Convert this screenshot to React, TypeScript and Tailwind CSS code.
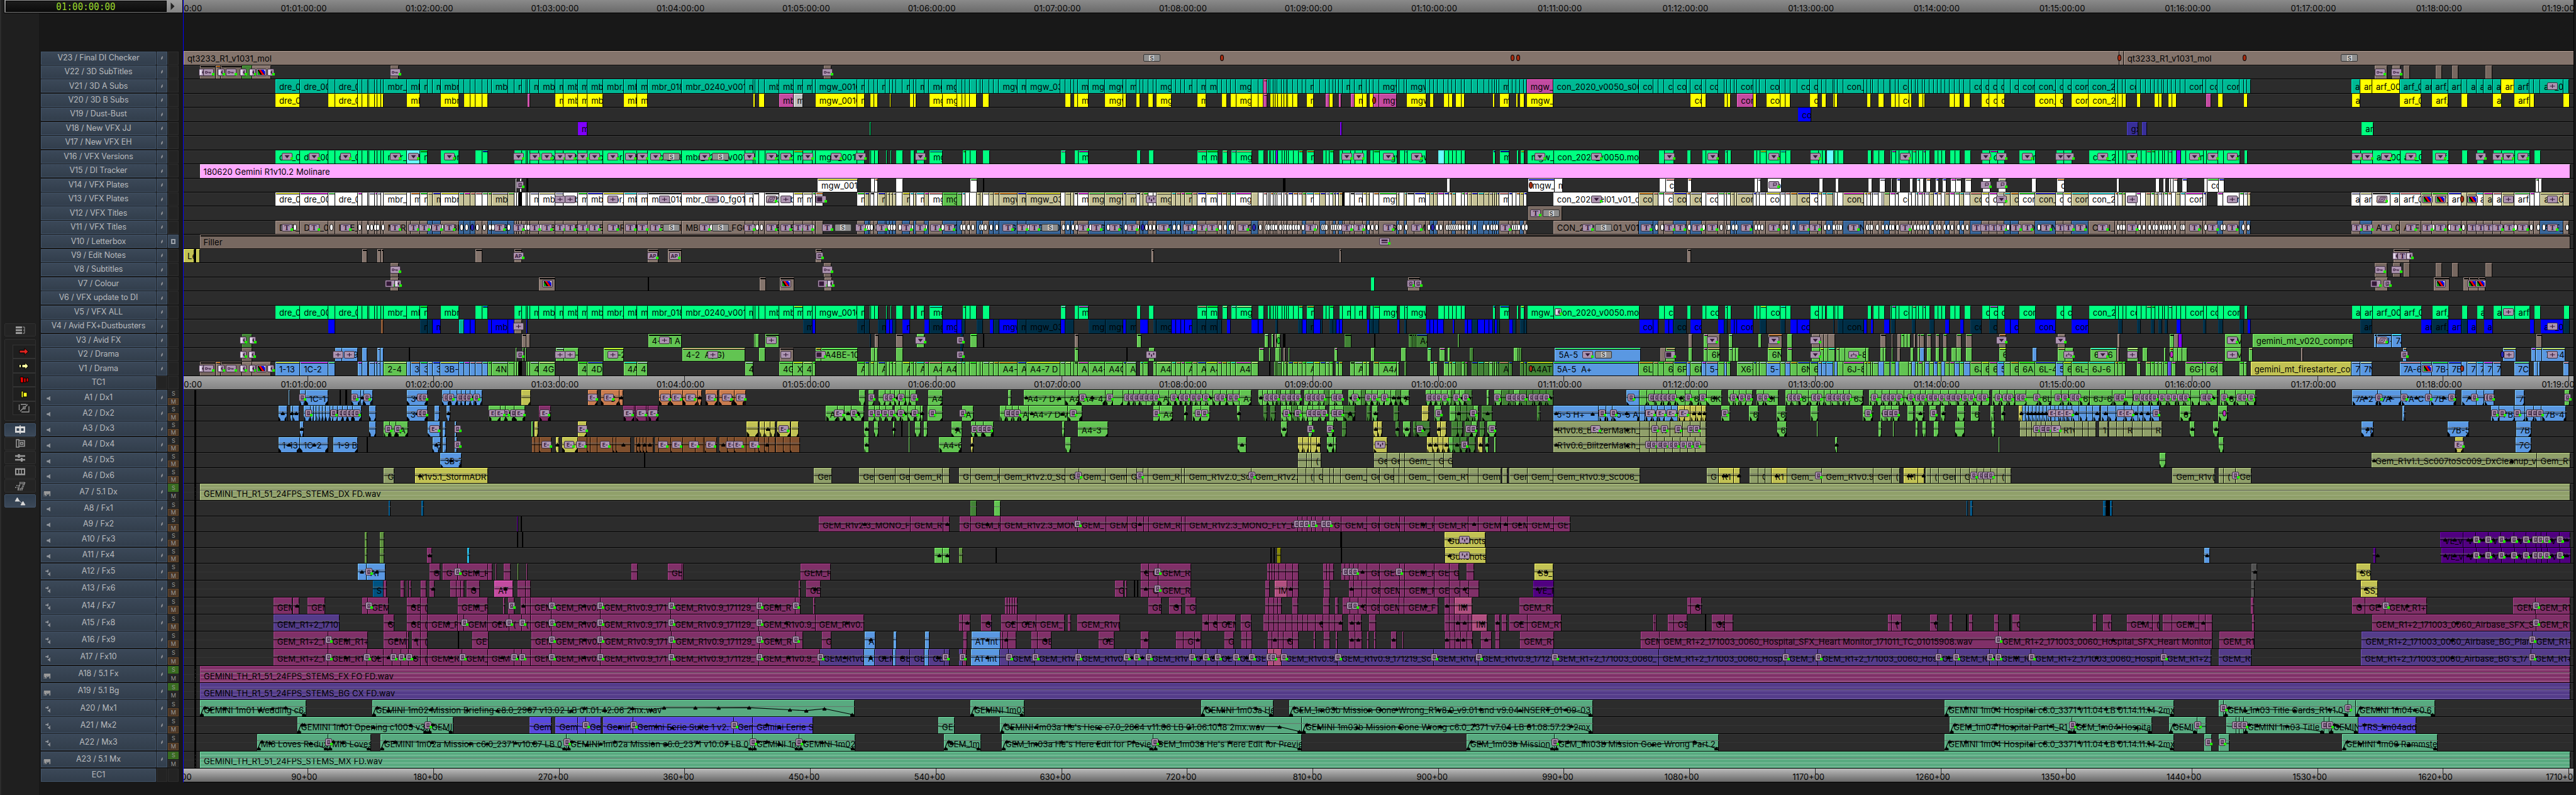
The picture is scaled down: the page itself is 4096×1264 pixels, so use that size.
import React from 'react';

const S = 4096 / 6932;
const ORIGIN = 494;

type Base = [number, number];
const VB: Base[] = [[480, 0.82908], [1700, 0.82908], [2950, 0.82908], [4150, 0.82908], [5400, 0.97704]];
const AB: Base[] = [[490, 1.37117], [2630, 1.37117], [4770, 1.37883]];

const FILL: Record<string, string> = {
  t: 'bg-[#00b894] border-[#00f4cc]',
  y: 'bg-[#ffff00] border-[#ffff00]',
  g: 'bg-[#00ff80] border-[#00ff80]',
  w: 'bg-white border-white',
  k: 'bg-[#c6c298] border-[#fffbc8]',
  b: 'bg-[#84746c] border-[#b09c93]',
  B: 'bg-[#776860] border-[#9d8a82]',
  u: 'bg-[#0000ff] border-[#0000ff]',
  n: 'bg-[#002e46] border-[#003c5c]',
  s: 'bg-[#3a6698] border-[#4c88cc]',
  G: 'bg-[#62c452] border-[#86fa70]',
  D: 'bg-[#428236] border-[#58ae48]',
  c: 'bg-[#5a98e2] border-[#80ccff]',
  m: 'bg-[#c24ba0] border-[#ff64d2]',
  p: 'bg-[#ffa8ff] border-[#ffd0ff]',
  a: 'bg-[#68ffff] border-[#68ffff]',
  x: 'bg-[#c0c0c0] border-white',
  v: 'bg-[#8000ff] border-[#8000ff]',
  i: 'bg-[#382f98] border-[#4c40cc]',
  Y: 'bg-[#c2c254] border-[#ffff70]',
  o: 'bg-[#90a06a] border-[#c0d68c]',
  P: 'bg-[#803068] border-[#ac408c]',
  V: 'bg-[#543c8a] border-[#7050b8]',
  M: 'bg-[#58aa80] border-[#76e6ac]',
  I: 'bg-[#5848de] border-[#7464ff]',
  O: 'bg-[#c87c50] border-[#ffa46a]',
  R: 'bg-[#80502e] border-[#a86a3e]',
  L: 'bg-[#500080] border-[#6c00ac]',
  K: 'bg-[#b05080] border-[#e86aa8]',
  d: 'bg-[#005280] border-[#006cac]',
  F: 'bg-[#5e9040] border-[#7cc054]',
  C: 'bg-[#20a8d8] border-[#30d8ff]',
  Q: 'bg-[#868600] border-[#b0b000]',
  H: 'bg-[#505050] border-[#707070]',
  z: 'bg-black border-black',
};

const CAP: Record<string, string> = {
  y: 'bg-[#ffff00]', c: 'bg-[#00ffff]', m: 'bg-[#ff00ff]', l: 'bg-[#00ff00]', L: 'bg-[#54ff54]',
  o: 'bg-[#ff8000]', b: 'bg-[#0000ff]', s: 'bg-[#ff8080]', v: 'bg-[#c8c8ff]', e: 'bg-[#ffffa0]', k: 'bg-black',
};

interface Clip { x: number; w: number; gap: number; color: string; cap?: string; label?: string }
interface Mark { x: number; kind: string }

function parseClips(sections: string[], bases: Base[], lead = ''): Clip[] {
  const points: { x: number; color: string; cap?: string; label?: string }[] = [];
  sections.forEach((text, i) => {
    const full = i === 0 ? lead + text : text;
    full.split(' ').forEach((token) => {
      const m = /^(\d+)([^\d:])([a-zA-Z])?(?::(.*))?$/.exec(token);
      if (!m) return;
      points.push({ x: (bases[i][0] + +m[1] * bases[i][1] - ORIGIN) * S, color: m[2], cap: m[3], label: m[4]?.replace(/~/g, ' ') });
    });
  });
  const clips: Clip[] = [];
  let cursor = 0;
  points.forEach((p, i) => {
    if (p.color === '.') return;
    const end = i + 1 < points.length ? points[i + 1].x : (6926 - ORIGIN) * S;
    clips.push({ ...p, w: Math.max(1, end - p.x), gap: p.x - cursor });
    cursor = p.x + Math.max(1, end - p.x);
  });
  return clips;
}

function parseMarks(sections: string[], bases: Base[]): Mark[] {
  return sections.flatMap((text, i) =>
    text.split(' ').filter(Boolean).flatMap((group) =>
      group.slice(1).split(',').map((n) => ({ kind: group[0], x: (bases[i][0] + +n * bases[i][1] - ORIGIN) * S })),
    ),
  );
}

const versions = [
  '315g:dre_0010 395g:dre_0020 486g 508g:dre_0040 583g 597g 615g 619g 638g 645g 657g 667g:mbr_0010 742a:mbr 785gl:mbr 810. 851g:mbr 911. 964g 986gb 1005. 1091g:r 1116g 1129g 1133g 1142g:mbr 1171g:mbr 1224g:mbr 1251g:mbr 1297g:mbr 1328g:mbr 1379g:mbr_0 1446g:mbr',
  '18g:mbr 53g:mbr_0180 163g:mbr_0240_v001 368g:mbr 395g 402g 413g 433g:mbr 479g:mbr 525gy:mbr 556g:mbr 587g 597g:mgw_0010 732g:mgw 757. 772g 775. 776g 788g 800. 825g 829. 839g 843. 858g 880. 904g 916. 925g:mgw 950. 966gc:mgw 1009. 1074gl 1084g 1098g 1120. 1140g 1162. 1393gv 1408. 1437g 1449gm:mgw 1483.',
  '131g 144. 170g 187. 329gs:mgw 358gl:mgw 395. 409ge 426. 438gv 455ge:mgw 505. 527g 544. 557g 563g 567g 576g 583v 590g 604g 611g 619g 624g 640g 657go 671. 684go:mgw 708. 736g 746g 758gl 771. 790g 801g:mgw 827g 840g:mgw 866g 880. 889g 901gl 920g:mgw_ 978. 986g 1002gc 1010g:mgw_ 1072. 1110a 1130g 1146g 1158g 1170g 1187g 1198. 1289gb 1296. 1311gb:mgw 1342. 1365g 1371. 1378gy 1391. 1400g:mgw_0',
  '38g:con_2020_v0050.mov 317. 380g 399g:con 428. 471g 484. 520g 534g:con 573. 594gc 603g 614. 688g 698g 708gy 730g:con 775gc 792g 809. 872g:con 898g 911g 921. 925a 947g 951g 962g 980. 1058g 1070. 1077g 1094g 1113. 1131g 1135gm 1149g 1161g:con 1193g 1203gs 1215g 1224g 1238gm 1246g 1260. 1275g 1287g 1299g 1311. 1325g 1342g 1359. 1372g 1393. 1429g:con 1454gm:con 1480g:con 1504.',
  '36g:con 81. 138g:con 159g:con 181. 228g:con_20 302g 310g 322g 331g:con 361g 372g 386gs 400gl 410g 421g 431g 437g 447gv 458g 470v 482g 496g:con 544g 552g:con 584g 599g:con 644. 656g 666. 953g:arf 977g:arf 1010g:arf_001 1086g:arf_00 1145. 1174g:arf_ 1219. 1256g 1272. 1297g:arf 1317. 1342g:arf 1366g:arf 1401g:arf_ 1444. 1456g 1473.',
];

const plates = [
  '315wy:dre_0010 395wm:dre_0020 486wL 508w:dre_0040 583wm 597w 615wy 619wv 638wm 645wv 657w 667we:mbr_0010 742w 754wo:mbr 785wl:mbr 810ke 825kb:mbr 851wy:mbr 911kc 928km 947ks 964ws 986wL 1005kl 1017kv:mbr 1070kL 1091w 1100w 1106z 1116w 1129w 1133w 1142wv:mbr 1171we:mbr 1224wv:mbr 1251w:mbr 1297wl:mbr 1328wb:mbr 1379wy:mbr_0 1446wc:mbr',
  '18wv:mbr 53wk:mbr_0180 163ws:mbr_0240_fg01 368wv:mbr 395wk 413w 433wk:mbr 479w:mbr 525wy:mbr 556we:mbr 587wl 597wo 622. 732wl:mgw 757kb 772kb 776wk 788w 800kb:mgw 825ky 829ke 839ke 849kv 858w 880ky:mgw 904wc 916kv 925wc:mgw 950km 966ws:mgw 1009GL:mgw 1056Gv 1074wc 1084w 1098w 1120ke 1132k 1140we 1162ke 1176ko 1193ko:mgw_ 1253kb:mgw 1282ky:mgw_0340 1393w 1408ke 1427k 1437wk 1449wm:mgw 1483kL:mgw',
  '30kL:mgw 88kb 99kv:mgw 131wk 144ke 153kl 170w 187w 197ke:mgw 245kc 260ks 276km 289kl:mgw 313ks 329wb:mgw 358wy:mgw 395wm 409wo 426kL 438wc 455wm:mgw 505k 527w 544ws 557w 563w 567wo 576wl 583wy 590wv 604w 611ws 619wo 624wb 640wo 657ws 671kl 684wc:mgw 708wy 729kb 746wv 758wl 771kb 780wb 790ko 801z 808w 827wk 840wv:mgw 866wy 880ke 889w 901wo 920wl:mgw_ 978kv 986w 1002kc 1010wk 1035wb:mgw 1072wy 1085kc 1097ks 1110wm 1130wb 1146wo 1158kc 1170w 1187wl 1198wm 1208ke 1221kb 1241kc 1262ke 1278kv 1289ke 1296kl 1303kb 1311ws:mgw 1342wb 1354w 1365wo 1378ky 1391wb 1400.',
  '38w:con_2020_el01_v01_comp 317ko:con 363ks 380wl 399ws:con 428kb:con 471wo 484kv:con 520w 534ws:con 573wL 594wy 603wl 614ke 626k 635kv:con 688wb 698wv 708wv 730wy:con 775wv 792ws 809ko 831kb:con 872wb:con 898wy 911wc 925kc 947w 951w 962w 980km:con_2 1047wy 1058wo 1070wv 1077wv 1094w 1106w 1113kL 1131wm 1149wk 1161w:con 1193wv 1203w 1215wc 1224wm 1238wm 1246wv 1260ke 1275wb 1287wo 1299w 1311ks 1325wm 1342wL 1359kc 1372wv 1393ks:con 1429wy:con 1454wm:con 1480we:con 1504kc',
  '13ko:con 36wl:con 81kb:con_ 138wL:con 159wy:con 181kc:con 228wc:con_20 302wo 310wl 322kl 331w:con 361wm 372w 386ks 400wl 410kv 421wv 431wy 437wl 447wo 458w 470ke 482wc 496wm:con 544wb 552wm 555. 584wm 599w:con 644wl 656wv 666ks 675. 953wv:arf 977we:arf 1010wk:arf 1059wc:arf 1086ws:arf_00 1145kL:arf 1174kl:arf_ 1219wb:arf 1256k 1272ke:arf 1297wc:arf 1317km:arf 1342ws:arf 1366ke:arf 1401wL:arf_ 1444wm 1456w 1473ke:arf_00 1536ks 1553.',
];

const titleCards = [
  plates[0], plates[1], plates[2], plates[3],
  '13s:con 36b:con 81s:con_ 138b:con 159b:con 181s:con 228b:con_20 302b 310b 322b 331b:con 361b 372b 386b 400b 410b 421b 431b 437b 447b 458b 470b 482b 496b:con 544b 552b:con 584s 599b:con 644s 656b 666s 675. 953b:arf 977s:arf 1010b:arf_00 1086b:arf_00 1145b:arf 1174b:arf_ 1219b:arf 1256b 1272b:arf 1297b:arf 1317b:arf 1342b:arf 1366b:arf 1401b:arf_ 1444b 1456b 1473s:arf_00 1536b 1553.',
];

const titleMarks = ['f77 k97 f138 k171 f210,241 r268 f299 k703', 'k634', '', '', 'k1029,1073'];

interface VTrack { name: string; clips?: string[]; marks?: string[]; map?: Record<string, string>; upper?: boolean; noCap?: boolean }

const video: VTrack[] = [
  { name: 'V23 / Final DI Checker', clips: ['17b:qt3233_R1_v1031_mol', '', '', '', '311b 322b:qt3233_R1_v1031_mol 1562.'], marks: ['', '', 'S180 0407,1351,1370', '', '0311,655 S944'] },
  { name: 'V22 / 3D SubTitles', clips: ['69Bk 122bo 137Bk 206D 240b 301. 689B 716.', '623B 648.', '', '', '1014b 1049. 1063b 1084. 1094B 1111. 1182B 1199. 1227B 1244. 1319B 1338.'], marks: titleMarks },
  {
    name: 'V21 / 3D A Subs', clips: [
      '315t:dre_0010 395t:dre_0020 486t 508t:dre_0040 583t 597t 615t 619t 638t 645t 657t 667t:mbr_0010 742t:mbr 785t:mbr 810t 825t:mbr 851t:mbr 911t 928t 947t 964t 986t 1005t 1017t:mbr 1070t 1091t:r 1116t 1129t 1133t 1142t:mbr 1171t:mbr 1224t:mbr 1251t:mbr 1297t:mbr 1328t:mbr 1379t:mbr_0 1446t:mbr',
      '18t:mbr 53t:mbr_0180 163t:mbr_0240_v001 368t:mbr 395t 402t 413t 433t:mbr 479t:mbr 525t:mbr 556t:mbr 587t 597t:mgw_0010 732t:mgw 757t 772t 788t 800t:mgw 825t 839t 849t 858t 880t:mgw 904t 916t 925t:mgw 950t 966t:mgw 1009t:mgw 1056t 1074t 1084t 1098t 1120t 1132t 1140t 1162t 1176t 1193t:mgw_ 1253t:mgw 1282t:mgw_0340 1393t 1408t 1427t 1437t 1449t:mgw 1483t:mgw',
      '30t:mgw 88t 99t:mgw 131t 144t 153t 170t 187t 197t:mgw 245t 260t 276t 289t:mgw 313t 329t:mgw 358t:mgw 395t 409t 426t 438t 455t:mgw 505t 527t 544ms 557t 563t 567t 576t 583t 590t 604t 611t 619t 624t 640t 657t 671t 684t:mgw 708t 729t 746t 758t 771t 780t 790t 801t:mgw 827t 840t:mgw 866t 880t 889t 901t 920t:mgw_ 978t 986t 1002t 1010t:mgw_ 1072t 1085t 1097t 1110t 1130t 1146t 1158t 1170t 1187t 1198t 1221t 1241t 1262t 1278t 1289t 1296t 1303t 1311t:mgw 1342t 1354t 1365t 1378t 1391t 1400m:mgw_0',
      '38t:con_2020_v0050_s001 317t:con 363t 380t 399t:con 428t:con 471t 484t:con 520t 534t:con 573t 594t 603t 614t 626t 635t:con 688t 698t 708t 730t:con 775t 792t 809t 831t:con 872t:con 898t 911t 925t 947t 951t 962t 980t:con_2 1047t 1058t 1070t 1077t 1094t 1113t 1131t 1135t 1149t 1161t:con 1193t 1203t 1215t 1224t 1238t 1246t 1260t 1275t 1287t 1299t 1311t 1325t 1342t 1359t 1372t 1393t:con 1429t:con 1454t:con 1480t:con 1504t',
      '13t:con 36t:con 81t:con_ 138t:con 159t:con 181t:con 228t:con_20 302t 310t 322t 331t:con 361t 372t 386t 400t 410t 421t 431t 437t 447t 458t 470t 482t 496t:con 544t 552t:con 584t 599t:con 644t 656t 666t 675. 953t:arf 977y:arf 1010y:arf_001 1086t:arf_00 1145t:arf 1174t:arf_ 1219t:arf 1256t 1272t:arf 1297t:arf 1317t:arf 1342t:arf 1366y:arf 1401t:arf_ 1444t 1456t 1473t:arf_00 1536t 1553.',
    ], marks: ['', '', '', '', 'p1503'],
  },
  {
    name: 'V20 / 3D B Subs', clips: [
      '315y:dre_0010 395. 486y 508y:dre_0040 583y 597y 615y 619y 638y 645y 657y 667. 742y:mbr 785. 851y:mbr 911. 928y 947y 964y 986y 1005. 1133m 1142. 1224y:mbr 1251y:mbr 1297y:mbr 1328y:mbr 1379. 1446y:mbr',
      '18y:mbr 53. 395y 402. 413y 433. 479m:mbr 525x:mbr 556. 597y:mgw_0010 732y:mgw 757. 776y 788y 800. 839y 843. 904y 916y 925. 966y:mgw 1009y:mgw 1056y 1074y 1084y 1098y 1120. 1140y 1162. 1408y 1427. 1437y 1449y:mgw 1483.',
      '30y:mgw 88y 99. 131y 144. 170y 187. 197y:mgw 245. 329y:mgw 358. 409y 426. 438y 455y:mgw 505y 527y 544ms 557. 567y 576y 583y 590y 604y 611y 619y 624y 640y 657. 684y:mgw 708. 746m 758y 771. 790m 797. 827m 840y:mgw 866y 880. 889y 901m 920m:mgw_ 978. 1010y:mgw_ 1072. 1085y 1097. 1130y 1146y 1158. 1170y 1187y 1198. 1289y 1296. 1311y:mgw 1342. 1365y 1371. 1378y 1391. 1400y:mgw_0',
      '38. 484y:con 520y 534. 594y 603y 614. 635m:con 688y 698. 730y:con 775y 792y 809. 872y:con 898. 911y 925. 947y 951y 962. 1058y 1070. 1094y 1113. 1135y 1149y 1161y:con 1193y 1203. 1224y 1238y 1246. 1325y 1342y 1359. 1372y 1393. 1429y:con 1454y:con 1480y:con 1504.',
      '81y:con_ 138y:con 159. 181y:con 228y:con_20 302y 310y 322y 331. 361y 372. 410y 421y 431. 447y 458y 470. 552m 566. 584y 599. 656y 666. 953y:arf 977. 1086y:arf_00 1145. 1174y:arf_ 1219. 1256y 1272. 1342y:arf 1366. 1401y:arf_ 1444y 1456. 1536y 1553.',
    ], marks: ['', '', '0902', '', ''],
  },
  { name: 'V19 / Dust-Bust', clips: ['', '', '', '831u:con 873.', ''] },
  { name: 'V18 / New VFX JJ', clips: ['1297v:mbr 1328.', '772g 775.', '790v 797.', '', '331i:gx 361. 372i 386. 977g:arf 1010.'] },
  { name: 'V17 / New VFX EH' },
  {
    name: 'V16 / VFX Versions', clips: versions, marks: [
      'v352,440,543,703,763,879,1103,1156,1196,1238,1272,1313,1351,1411,1467',
      'v34,77,236,381,453,499,571,663,743,936 S129,288', 'v813,852,948,1040,1440',
      'v176,412,553,751,886,1178,1440,1490',
      'v57,148,170,264,346,517,567,621,964,993,1046,1113,1195,1306,1353,1382,1421'],
  },
  { name: 'V15 / DI Tracker', clips: ['69p:180620~Gemini~R1v10.2~Molinare', '', '', '', '1553.'] },
  {
    name: 'V14 / VFX Plates', clips: [
      '1094w 1097. 1108w 1114. 1129z 1134.',
      '602wy:mgw_001 732. 776w 788wo 798. 858w 880. 1098wl 1120. 1140z 1143.',
      '604z 613. 1136w 1146. 1401wb:mgw_0 ',
      '38w:mgw 64. 380w 399ws:con 428. 471wo 484. 688w 698wv 708. 730w:con 775. 898w 911. 951w 962. 1058w 1070. 1094wv 1113. 1131w 1135. 1149wb 1161. 1193w 1203. 1215wc 1224w 1238. 1246wo 1260. 1275wb 1287. 1299wb 1311. 1325wm 1342wk 1359. 1372we 1393. 1429w 1454. 1480we 1504.',
      '69w 81. 138wo:con 159. 302w 309. 410w 421. 431w 437. 447w 452w 458ws 470. 482wb 496. 544w 552wl:con 584wb 599. 1456wl 1465w 1473.',
    ], marks: ['x1109', '', '01411', 'q751,1440,1490', ''],
  },
  { name: 'V13 / VFX Plates', clips: plates, marks: ['p1238,1272,1411', 'p106,264,499 w453 h615', 'W178', 'v176,1490', 'p346,621,1382,1503 w1034 r1158,1195,1283 01255'] },
  { name: 'V12 / VFX Titles', clips: ['', '', '1401B', '64.', ''], marks: ['', '', 'T1426 S1477', '', ''] },
  {
    name: 'V11 / VFX Titles', clips: titleCards, map: { w: 'b', k: 's', G: 's', z: 'b' }, upper: true, noCap: true, marks: [
      'o378,497,588,614,627,639,647,663,815,856,919,936,970,992,1010,1022,1073,1122,1128,1136,1177 i953 T352,440,543,703,763,798,838,879,1042,1103,1156,1196,1238,1272,1313,1351,1411,1467',
      'o257,397,407,422,588,764,771,779,794,827,836,844,851,871,909,955,1010,1070,1079,1092,1107,1131,1138,1149,1167,1184,1289,1401,1416,1431,1444,1488 T34,77,236,381,453,499,540,571,634,743,811,891,936,986,1030,1221,1267,1307,1465,1508 S129,288,685,1358',
      'o39,96,135,162,176,188,202,252,267,320,402,418,434,443,533,552,559,570,576,583,598,607,614,622,631,640,648,657,671,711,735,741,747,765,771,778,785,792,831,870,883,895,909,982,988,1006,1079,1105,1119,1138,1147,1153,1159,1165,1172,1180,1190,1201,1211,1228,1259,1271,1283,1291,1299,1352,1359,1366,1372,1386,1396 i150,511,1092 T60,116,219,299,343,376,477,695,813,852,948,1040,1327',
      'o371,390,477,525,581,601,605,619,631,693,703,714,784,793,816,899,919,930,947,956,963,970,1054,1062,1070,1088,1106,1119,1131,1138,1153,1196,1210,1220,1230,1240,1252,1267,1282,1290,1306,1318,1331,1350,1365,1380 T148,338,412,448,502,552,661,751,849,885,1011,1178,1410,1440,1466,1490 S199',
      'o4,88,307,316,322,366,377,393,406,413,425,434,440,448,463,481,487,547,592,600,651,666,1174,1220,1257,1364,1401,1445,1464,1480,1543 T25,57,109,148,170,203,264,346,517,567,621,964,993,1046,1113,1158,1195,1236,1283,1306,1328,1353,1384,1421,1503'],
  },
  { name: 'V10 / Letterbox', clips: ['69Bk:Filler', '', '', '', '1553.'], marks: ['', '', 'e936', '', ''] },
  { name: 'V9 / Edit Notes', clips: ['17Y:Le 52z 58Y 69. 597bk 614. 645bk 657bk 667. 964bk 986. 1091bk 1116.', '53bk 86. 117bk 163. 597bk 617.', '180bk 187. 790bk 797.', '471bk 484.', '1066bk 1111.'], marks: ['A1103', 'A68,138 x610', '', '', 'f1071 T1090 f1110'] },
  { name: 'V8 / Subtitles', clips: ['689B 716.', '623B 648.', '', '', '1014B 1049. 1063B 1084. 1094B 1111. 1182B 1199. 1227B 1244. 1319B 1338.'], marks: ['k703', 'k634', '', '', 'k1029,1073'] },
  { name: 'V7 / Colour', clips: ['689b 716. 1171bk 1224. 1523z 1525.', '413bk 433. 479bk 525. 623b 648.', '889g 901. 1010bk 1048.', '', '1014b 1049. 1174bk 1219. 1256bk 1272bk 1297bk 1317.'], marks: ['h688 f711 r1197', 'r499 h621 f644', 'x1020,1044', '', 'h1016 x1048 r1195,1283,1306'] },
  { name: 'V6 / VFX update to DI' },
  { name: 'V5 / VFX ALL', clips: [...versions.slice(0, 4), versions[4] + ' 1536g 1553.'], map: { a: 'g', v: 'g' }, marks: ['', '', '', 'f52', 'p1382'] },
  {
    name: 'V4 / Avid FX+Dustbusters', clips: [
      '486u 508. 657R 667. 785n:mbr 810n 825u:mbr 851. 911t 928u 947u 964. 1005u 1017u:mbr 1070u 1091b 1116. 1129u 1133.',
      '556n:mbr 587u 597. 732n:mgw 757n 772. 800n:mgw 825u 839u 849n 858. 880u:mgw 904. 950u 966n:mgw 1009u:mgw 1056u 1074n 1084. 1120n 1140. 1162u 1176n 1193u:mgw_ 1253n:mgw 1282n:mgw_0340 1393u 1408n 1437. 1483n:mgw',
      '30n:mgw 88u 99n:mgw 131. 144u 170. 187n 197n:mgw 245u 260u 276u 289u:mgw 313n 329n:mgw 358n:mgw 395n 409. 426u 438. 505u 527u 544. 583n 590. 657n 671u 684n:mgw 708u 729n 736. 758n 771n 780u 790u 801. 880u 889n 901n 920. 978u 986. 1002n 1010. 1072u 1085u 1097u 1110u 1130. 1158u 1164. 1198u 1208u 1221n 1241u 1262u 1278u 1289n 1296u 1303n 1311. 1342u 1354n 1365. 1378n 1391n 1400.',
      '317u:con 363u 380. 399u 414u 428n:con 471. 484u:con 520. 573u 594n 603. 614u 626u 635u:con 688. 708n 730. 775n 792. 809u 831u:con 872. 947n 951. 962n 980n:con_2 1047u 1058. 1070u 1077. 1113u 1131. 1135n 1149. 1203n 1215. 1260n 1275. 1311u 1325. 1359u 1372. 1393n:con 1429. 1454n:con 1480. 1504u',
      '13u:con 36. 81u:con_ 138. 181u:con 228. 310n 322. 361n 372. 400n 410. 421n 431. 437n 447. 470u 482. 544n 552. 584n 599. 644n 656. 666u 675. 977n:arf 1010. 1145u:arf 1174n:arf_ 1219u:arf 1256n 1272u:arf 1297. 1317u:arf 1342. 1444u 1456. 1473u:arf_00 1536n 1553.',
    ], marks: ['p1103', '', '', '', 'p1503'],
  },
  {
    name: 'V3 / Avid FX', clips: [
      '206D 240. 1116bk 1129b 1142.',
      '53Gk:4-2f1~A 163. 396G 402G 413. 433Gk 479. 772n 775. 788bk 800. 858bk 880. 925G 950. 1066n 1075. 1098Gl 1120. 1140z 1143. 1437bk 1449.',
      '131Gk 144. 544Gv 557. 567Ge 573. 577b 583G 595. 604z 613. 805Dk 827. 901z 902. 1010Dk 1022Dk 1028Dk 1035Db:A4 1072. 1170D 1176.',
      '471b 484. 520Gm 534b 573. 603Gv 614. 698G 708. 730bo 775. 792G 809. 872b 898b 911b 925b 947. 1094bk 1113. 1131b 1135. 1149b 1161Gl 1172G 1182G 1193. 1203b 1209. 1215bl 1224bl 1238. 1246bl 1260. 1275bl 1287. 1299bl 1311. 1342bl 1359. 1372bl 1393. 1480bo 1504.',
      '138b 159. 302b 309. 447Gk 458b 470v 482. 599G:~~~M 644. 675G:gemini_mt_v020_comprehensive 953. 1010ck 1016ck:~~J- 1059cc:7J 1086. 1456bk 1473.',
    ], marks: ['f210,240', 'p106,453 v936 x1066', '3591', 'v552,751,886,1490', 'v148,621 w1034'],
  },
  {
    name: 'V2 / Drama', clips: [
      '206B 240. 508c 532c:~~~9 583. 597c 614. 645cv 657c 667. 747z 750. 1094G 1098. 1116G 1121. 1124G 1129. 1224Gv 1251G:~~~- 1297. 1379Gy:4~~-2 1446.',
      '163Gs:4-2~~A(~G) 368. 413G 433. 479bk 525. 597Go 615GL:A4BE-10 732. 776G 788G 798. 858G 880. 1066n 1074. 1437Gk 1449.',
      '97z 100. 170G 187. 527Gm 544. 560G 564. 579G 595G 597. 605b 611. 620G 624. 770Gm 780. 889G 901. 986G 1002. 1072Gc 1085. 1110Gm 1130. 1138G 1146. 1208D 1221. 1352G 1365G 1371D 1378.',
      '38cl:5A-5 317. 380b 399Gs 428. 471G 484. 520Gm 534Gs:6K 573. 603Gv 614G 626G 635. 730Gy:6N 775. 792Gm 809. 872G 898Gy 911G 925Gc 947. 951Gs 962G 980G:~~~~-8 1047G 1058. 1094G 1106G 1113. 1131G 1135. 1149b 1161. 1193G 1203. 1215G 1224c 1238. 1246G 1260. 1275G 1287. 1299G 1311. 1325G 1342G 1359. 1372G 1393. 1480Gy:6 1504.',
      '69c 81. 138Gs 159G 181. 228Gc:6J-6 302b 309. 331Ge 361. 372G 386. 431G 437. 447Go 458G 470G 482G 496. 599G:~~~M 644. 666Gs 675. 809b 815. 1090co 1101. 1366cy 1401. 1444cm 1456cy 1473cy:7~~-4 1536.',
    ], marks: ['f209,238 p519 p555 x1109 p1238,1272,1411', 'p264,499 h613 x1066', 'W178', 'v147 S199 h414 v886 n1011', 'n170 v264 p346,621 x1095 p1384,1503 4454 i1365'],
  },
  {
    name: 'V1 / Drama', clips: [
      '69Bk 122bo 137Bk 206b 240b 301. 315cy:1-13 395cm:1C-2 486cL 508. 583cm 597c 615. 619cv 638cm 645cv 657c 667Ge:2-4 742c 754co:3 785cl:3 810ce 825cb:3 851cy:3B- 911cc 928cm 947cs 964cs 986cL 1005Gl 1017Gv:4N 1070GL 1091G 1100G 1106z 1116. 1129G 1133G 1142Gv:4 1171Ge:4G 1224. 1297Gl:4 1328Gb:4D 1379. 1446Gc:4A',
      '18Gv:4 53. 368Gv:4 395. 479GL:4G 525Gy:X 556Ge:4 587Gl 597. 732Gl:A 757Gb 772Gb 776Gy 788G 800Gb:A 825Gy 829G 839Gl 849Ge 858G 880Gy:A 904Gl 916Gv 925Gc:A 950Gm 966Gs:A4 1009GL:A4 1056Gv 1074Gc 1084G 1098Gl 1120G 1132G 1140Gv 1162Ge 1176Go 1193Go:A4- 1253Gb:A 1282Gy:A4-7~D 1393Gv 1408Ge 1427G 1437Gk 1449Gm:A 1483GL:A4-',
      '30GL:A4C 88Gb 99Gv:A 131. 144Gc 153Gl 170. 187GL 197Ge:A4 245Gc 260Gs 276Gm 289Gl:A 313Gs 329Gb:A 358Gy:A4 395Gm 409Go 426GL 438Gc 455Gm:A4 505Ge 527. 563z 567. 579G 583D 590Dv 604G 611Gs 619Do 624Gb 640Go 657Gs 671Gl 684Gc:A 708Gy 729Gb 746Gv 758Gl 771. 780Gb 790Go 801. 827Gk 840Gv:A 866Gy 880Ge 889. 901Go 920Gl:A4A 978Gv 986. 1002D 1010. 1085Gc 1097Gs 1110. 1130Gb 1146Go 1158Gc 1170D 1187Gl 1198Dm 1208. 1221Db 1241Dc 1262De 1278Gv 1289De 1296Gl 1303Db 1311Ds:A 1342Db 1354. 1378Dy 1391Db 1400Dy:A4AT',
      '38cl:5A-5~~A+ 317Go:6L 363Gs 380Gl 399Gs:6 428Gb:6P 471co 484Gv:6I 520cm 534cs:5- 573GL 594cy 603Gl 614. 635Gv:X6- 688Gb 698Gv 708Gv 730cy:5- 775Gv 792cs 809Go 831Gb:6N 872Gb:6 898cy 911cc 925cc 947G 951c 962G 980Gm:6J-8 1047Gy 1058Go 1070Gv 1077Gv 1094c 1113GL 1131c 1135Gl 1149c 1161G 1193Gv 1203c 1215Gc 1224Gm 1238G 1246cv 1260Ge 1275cb 1287Go 1299c 1311Gs 1325Gm 1342cL 1359Gc 1372cv 1393Gs:6J 1429Gy:6 1454Gm:6 1480cc:5 1504Gv',
      '13Go:6 36Gl:6A 81Gb:6L-4 138cL:5 159Gy:6 181Gc:6L- 228Gc:6J-6 302Go 310Gl 322Gl 331. 361Gm 372. 386Gs 400Gl 410Gv 421Gv 431G 437Gl 447I 458Gm 470. 496Gm:6G- 544Gb 552Gm:6C 584Gm 599. 644Gl 656Gv 666. 675Y:gemini_mt_firestarter_comp 953cv:7 977ce:7N 1010. 1086cs:7A-6 1145cL 1174cl:7B- 1219cb:7E 1256c 1272ce:7 1297cc:7 1317cm:7 1342cs:7 1366. 1401cL:7C 1444. 1456c 1465c 1473. 1536cs 1553.',
    ], marks: ['f77 k97 f138 k171 f210,241 r268 f299', '', '01411', '', 'r1158 01255'],
  },
];

type Layout = 'mono' | 'stereo' | 'surround';
interface ATrack { name: string; layout: Layout; clips?: string[]; marks?: string[]; env?: 'dense' | 'line' | 'music' | 'none' }

const RUN = '725P:GEM_R1v0.9 821P:GEM_R1v0.9_171 960P:GEM_R1v0.9_171129_';
const VE = '1303L:VE_v 1348L:V 1372L 1397L:V 1422L 1447L:V 1471L 1490L 1500L 1511L:V 1536L 1557.';
const VEM = 'x1373,1397,1422,1447,1470,1489,1499,1511,1536';
const HOSP = '336M:GEMINI~1m04~Hospital~c6.0_3371~v11.04~LB~01.14.11.14~2mx 784.';

const audio: ATrack[] = [
  {
    name: 'A1 / Dx1', layout: 'mono', env: 'dense', clips: [
      '209c 212. 231c 242c:1C-1 287. 309z 311. 320z 323. 332c 350c 357c 374. 441c:3 482. 510c 526c 540c 548c 557c 566c 575c 589. 666Y 684. 796O 815. 822O:~~C 858O 866. 936O 959O 983O 1012O 1020. 1027O 1051. 1054O:~~C 1084O 1106. 1329G 1341. 1347G 1358. 1367G 1381G 1390G 1399G 1409G 1420G 1428G 1441. 1464G:A4 1493.',
      '60G 67. 91G:A4-7~D+ 173G:A4 200G:A4-4 252G 267G 286G 297G 308G 320G 332G 345G 357G:A4 377G 390G 400G 410G 420G 430G 440G 450G 463G 478G 490G 502G 515G:A4 538. 552G 561G 570G 580G 588D 597G 606G 615D 624G 636. 642G 652G 660G 671G 682D 692G 703G 718. 729G 740G 755D 763G 775G 787G 800G 812G 822D 832G:A 849. 880G 890G 900G 912G 924G 931D 938G 947G 958D 972. 1000G 1005. 1015G 1030D 1045D 1054G 1066D 1080D 1092D 1105D 1118D 1131. 1274c 1301G 1315G:6 1330G 1345G 1358G 1372G:6I 1390G 1400G:6 1418G 1432G:6K 1462. 1474G 1486G 1497G 1510G 1523. 1530G 1545G:6I',
      '12. 26G 38G 50G:6 72G 90G 102G 115G 128G 140G 152G:6J 178. 190G 202G 215G 230G 245G 258G 272G 290G 300G 315G 330G 345G 360G 378G 395G 410G 425. 430G 445G 460G 475G 497G 520G:6L- 545G 565G 580G 600G:6I 620G:6J-6 665G 690G 705G 720G 738G 755G 772G 790G 805G 818G 835G 850G 870. 875G 885G:6 905G 925G 945. 1132c:7A-2 1183c:7A- 1228c:7A-C 1285c:7B- 1335. 1346c:7 1375c 1390c 1410. 1451c:7 1469. 1547G 1557.',
    ], marks: [
      'x236,338,363,467,475,518,527,545,555,563,577 E805,837,948,970,998,1037,1069,1096 x1353,1382,1391,1410,1436',
      'x207,260,294,303,312,321,331,341,351,385,402,410,424,435,448,472,480,497,508,568,577,586,600,612,621,629,650,659,668,677,702,711,741,767,779,799,887,896,905,917,940,958,1020,1044,1053,1062,1070,1088,1097,1106,1116,1283,1324,1333,1342,1350,1358,1366,1395,1424,1484,1500,1514,1536,1547',
      'x36,43,50,82,90,110,120,128,138,147,199,218,226,234,247,270,285,293,308,318,330,342,352,362,375,388,405,414,440,455,463,480,488,515,557,570,587,595,672,682,710,722,730,738,745,760,772,784,796,806,842,852,881,912,920,934,1183,1232,1280,1325,1370,1395,1402,1551'],
  },
  {
    name: 'A2 / Dx2', layout: 'mono', env: 'dense', clips: [
      '189c 206. 213c 218c 230. 239c 252c 258c 264c 270c 276c 282c 290c 297c 305c 315c 325c 335c 352. 367c 381. 441c:3 482. 496c 506. 519c 527. 602G 625G 635G 652G 674. 701P 724. 866P 888P 891P 912P 916P 935. 1264G:A 1287G 1300G 1314G:A 1339. 1347G 1360G 1370G 1382G 1396. 1399G 1412G 1425G 1440G 1450G 1455. 1464G 1493. 1531G:A 1554.',
      '45G 57G 70G 82G:A4 102G:A4-7~D~V 178G 206. 346G 358G:A4 384. 407G 412. 423G 440G 457. 510G 517. 562D 569. 576D 586. 597G 608G 618D 630G 640G 650G 660G 672G 685. 692G 703G 720D:A 742. 765D 772. 776G 787. 818D 828. 873Y 887. 898G 912. 928G 940D 950D 962D 975G 985. 991D 1012. 1100D 1106. 1131c:5-5~H+ 1221c 1235c 1248c:5-5~A 1301c 1312c 1325c 1337c 1350c 1363c 1376Y 1390Y 1401Y 1412Y 1423Y 1431. 1461G 1478. 1516G:6 1534.',
      '9G:6 28. 75G 90. 177G 197. 212G 222G 234G 248. 265G 277. 280G 297. 307G 321. 329G 338. 361G 376. 388G:6 405. 427G 434. 447G 454. 482Y 489c 495c 502c 509c 516c 523c 530c 537c 545c 553c 561c 569c 577c 586c 600c 615c 627c 640. 643c 657c 673c 688c 703c 715c 725c 740c 757. 796G:6 818. 871G 890. 1231c 1236. 1404c 1420c:7B 1450c 1470c 1488c 1502c:7B-4 1550.',
    ], marks: [
      'x248,297,312,320,328,335,343,467,475,635,650 E612,624,663,712,876,901,924,1289 x1318,1353,1366,1380,1392,1410,1438,1472,1532',
      'x60,70,78,188,351,434,446,607,629,652,661,670,680,702,712,905,973,1226,1248,1467 E1320,1342,1362,1386',
      'x186,221,230,240,314,749,1409,1424,1453,1478,1487,1497 E547,562,577,682,695 4882'],
  },
  {
    name: 'A3 / Dx3', layout: 'mono', env: 'dense', clips: [
      '231c 239. 367c 381. 396G 408G 420G:A 444. 482c 506. 511c 518. 535c 539. 686G 689. 692Y 699. 777Y 794. 1108Y 1131. 1134Y 1144Y 1155Y 1165. 1168Y 1194. 1196Y 1210. 1339G 1348. 1358G 1367. 1395G 1399. 1412z 1414. 1426G 1429. 1438G 1449. 1455G 1463. 1510G:A 1531. 1548G 1558G',
      '12G 32. 166G 171. 197G:A4-3 257. 596G 608. 650G 658. 686G 700. 716D 724. 778Y 786Y 795. 821D 828. 836G 850. 856D 862D 889. 902Y 910Y 921. 931D 943D 953. 957D 970G 982. 986D 996. 1001G 1019. 1131o:R1v0.6_BlitzerMatch_ 1301o 1320o 1335o:R 1360o:RR 1385o 1400o 1420o 1431.',
      '9G:6 28. 87G 89. 207G 213. 235G 237. 279G 283. 292G 299. 314G 324. 356G 375. 427G 434. 482o 496o 506o 515o 524o 533o 545o 560o:R1v 590o 605o 616o 631. 637o:1 655. 657o 672o 685o:R 702o 722o 740o:R 760. 814G 824. 860G 871. 1149c:7N 1173. 1317c:7B-5 1359. 1451c:7B 1481.',
    ], marks: ['x405,423,540,1555 E495,785,1180', 'x5,14,23,653,692,868,965,973,1010,1330,1348,1375,1400,1411 E1213', 'x515,528,538 E553'],
  },
  {
    name: 'A4 / Dx4', layout: 'mono', env: 'dense', clips: [
      '189c:1-13 231c:1C-2 287. 297c:1-9~B 345. 362z 364. 491c:3 507. 511c 518. 535c 539. 686R 692R 701R 725. 733Y 740. 746Y 777R 795R 801R 815R 846R 852R 880. 888R 893R 899R 905R 911R 925. 928R 936R 959R 983R 1008R 1023R 1026R 1050. 1054R 1070R 1084R 1107R 1125R 1132R 1144R 1152R 1164. 1166R 1180R 1194R 1213. 1339G 1348. 1426G 1429. 1486G:A4-6 1530. 1548Y 1553.',
      '173G 184. 511G 528. 629Y 640Y 650Y 655. 656Y 666Y 674. 686G 700G 705. 778Y 805. 883Y 894Y 905Y 915Y 926G 935D 948D 962. 965D 978. 983Y 992. 997G 1004. 1015G 1018. 1131o:R1v0.6_BlitzerMatch_ 1301o 1320o 1335o 1350o 1365o 1380o 1395o 1410o 1431.',
      '122G 128. 442G 444. 871G 881. 1332Y 1348. 1450c:7C 1481.',
    ], marks: ['E715,760,783,830,944,971,1004,1037,1077,1091,1122 x540', 'W790 x956,1318,1327,1340,1350,1362,1371,1385,1398,1412', 'E1340'],
  },
  { name: 'A5 / Dx5', layout: 'mono', env: 'dense', clips: ['507c:3B-7 549. 907z 909.', '629o 646o 656o:( 674. 778o:Ge 804o:Ge 829o 839o:Gem_ 897o:G 915o:G 933.', '755G 767. 1169o:Gem_R1v1.1_Sc007toSc009_DxCleanup_v 1491o:Gem_R1 1557.'] },
  {
    name: 'A6 / Dx6', layout: 'mono', env: 'line', clips: [
      '396o:G 417. 457Y:R1v5.1_StormADR 600. 1240o:Gem 1275. 1329o:Ge 1359o:Gem 1400o:Ge 1429o:Gem_R 1493o 1506. 1525o:G 1548o:Gem_R',
      '45o:Gem_R1v2.0_Sc 173o:G 200o:Gem_ 252o:Gem 294o:G 313o 326o 336o:Gem_R 401o 408o:Gem_R1v2.0_So 538o:Gem_R1v2. 629o 646o:( 662o:G 679o 692o 700o 714o:Gem_ 765o:Ge 790o:Ge 818o 829o 839o:Gem_ 897o:Gem_R1 964o 984o:Gem 1028. 1031o 1041. 1045o:Gem 1080o:Gem_ 1131o:Gem_R1v0.9_Sc006_ 1301. 1432o:G 1455Y:R1 1485Y 1497. 1516o 1533o:G 1547o 1559Y:R1',
      '29o:Gem_ 97o:Gem_R1v0.9 198o:Gen 233o:( 249. 256Y:R1 285Y 297. 300o 309o:( 325o:Gen 358o 368o:G 385o 400o 413o 427o 440o:( 455o 466. 781o:Gem_R1v( 864. 871o 881o:( 905o:Ge 935.',
    ], marks: ['', 'x198,319,538', 'x90,393,407,416,426,903'],
  },
  { name: 'A7 / 5.1 Dx', layout: 'surround', clips: ['35o:GEMINI_TH_R1_51_24FPS_STEMS_DX~FD.wav', '', '1557.'] },
  { name: 'A8 / Fx1', layout: 'mono', clips: ['405d 409. 470d 474. 1547D 1559.', '33G 45.', '378d 381. 386d 391. 645d 651z 659d 663.'] },
  {
    name: 'A9 / Fx2', layout: 'mono', env: 'line', clips: [
      '657L 660. 665z 667. 1249P:GEM_R1v2.3_MONO_F 1429P:GEM_R 1493P 1506. 1525P:G 1548P:GEM_R',
      '45P:GEM_R1v2.3_MON 197P:GEM_ 252P:GEM 294P:G 313P 326P 336P:GEM_R 401P 408P:GEM_R1v2.3_MONO_FLY_B 629P 638P 647P 656P 664P 679P 692P:G 714P:GEM_ 765P:GE 790P:GEM 829P 839P:GEM_F 897P:GEM_R1 964P 984P:GEM 1028P 1041P:GEM 1080P:GEM_ 1131P:GE 1164.', ''],
    marks: ['', 'x197,627,636,646,660,680,689', ''],
  },
  { name: 'A10 / Fx3', layout: 'mono', env: 'line', clips: ['359F 363. 388F 397. 657z 660. 667z 669.', '712z 715. 917Y:Gunshots 997.', VE], marks: ['', 'W956', VEM] },
  { name: 'A11 / Fx4', layout: 'mono', env: 'line', clips: ['359F 363. 388F 397. 481P 491. 560C 565. 1477G 1493G 1506. 1525F 1532.', '36z 38. 575z 577. 580z 582. 587Q 595. 712z 714. 917Y:Gunshots 997.', '841c 852. 1171L 1176. ' + VE], marks: ['', 'W956', VEM] },
  {
    name: 'A12 / Fx5', layout: 'stereo', env: 'line', clips: [
      '345c 362c:AT 399. 486P:G 507. 511P:G 541P:GEM_R 600P 609. 615P 618. 631P 645. 659F 661. 675P 678. 881P 894. 953P:GE 981P 984. 1213P:GEM_R 1273.',
      '320P:G 336P:G 355P:GEM_R1 419. 569P 573P 578P 584P 592P 606P 619P 630. 679P 686P 692P 700. 714P 722P 730P 739P 748P 765P:GE 790P:GEM 829P 839P:GEM_F 897P:GE 927P:G 945. 960P 975. 1093Y:S5_ 1131.',
      '935H 946. 1140Y:S6 1168.'], marks: ['x366,540', 'x354,723,732,741,828', ''],
  },
  {
    name: 'A13 / Fx6', layout: 'stereo', env: 'line', clips: [
      '374d:S 395P 402. 429P 436. 441P 444. 446P 450. 468P 479. 486P 496. 526P 539P 547P 554. 559P:G 584. 613m:AT 650. 658P 675P 684. 1210P 1214. 1225P:GE 1254.',
      '270P:G 288. 290P 294. 307z 309. 313z 315. 320P 336P:G 355P:GEM_R 419. 565P 573. 583K:IM 608P 619P 630. 679P 692. 729P 739P 755P 765P:GE 790P:GEM 829P 839P:GEM_F 897P:GE 927P:G 948P:GI 965P 984. 1090L:VE_F 1131.',
      '934H 940. 1148Y:SS_ 1181.'], marks: ['', 'x354', ''],
  },
  {
    name: 'A14 / Fx7', layout: 'stereo', env: 'line', clips: [
      '179P:GEM 216. 218P 230. 246P:GEM 281. 353P 365P:GEM 406. 441P:GE 468P:( 482. 541P:GEM_R 600. 630P 634. 640P 652. 665P 675P 684P:GEM ' + RUN + ' 1133P:GEM_R 1204P 1214. 1239P 1243.',
      '54P 59P 64P 69P 74P 79. 336P:GE 362. 377P:G 401. 409P:G 430. 565P 573P 583P 590P 598. 619P 630. 679P 692. 703P 709. 718P 732P 748P:G 765P:GE 790P:GEM 829P 839P:GEM_F 905. 917P 927P 937K:IM 972. 1064P:GEM_R 1131. 1394P 1401P:G 1423.',
      '934P 940. 1132P:G 1157P:GE 1197P:GEM_R1+ 1278. 1446P:GEM 1490P:GEM_R1 1557.'], marks: ['x366,646,725,821,960,1133,1204', 'x731,741', 'x1197,1490'],
  },
  {
    name: 'A15 / Fx8', layout: 'stereo', env: 'line', clips: [
      '179V:GEM_R1+2_1710 309. 396P:G 417. 441P:GE 468P:( 482P:GEM_R 541P 554P:GEM 600P:GEM 642P:( 667P:( 684P:GEM ' + RUN + ' 1133P:GEM_R1v0.9_ 1243P:GEM_R1v0. 1339. 1525P 1532P 1547.',
      '8P:G 29. 47P:GE 79P:GEM 116P:GEM_ 172. 178P 184. 197P:GEM_R1v( 280. 442P 455P:G 472P:GEM 508. 517P:G 538. 562P 573P 583P 592P 606P 619P 630P 640P 650P 665P:G 679P 692P 703P 718. 729P 741P 755. 769P 783. 918P 927P 937P 948P 965P 972K:IM 1001. 1016P 1026. 1030P 1040. 1045P:GE 1080P:GEM_R1 1147. 1327P 1331P 1334. 1356P 1368P:GE 1394. 1429z 1431. 1442P:GE 1468P 1484.',
      '225P 233P:( 252. 308P:( 323. 346P 352. 378z 380. 383P 391. 433P 441. 462z 464. 468P:G 483. 625P 632. 645P:( 662. 691P:GEM_ 741P:( 755. 761P 780P:GEM_ 832P 845P 858. 935P 941. 1170P:GEM_R1+2_171003_0060_Airbase_SFX_S 1490P:GEM_R 1557.'],
    marks: ['x554,642,667,725,821,960,1133', '', 'x1490'],
  },
  {
    name: 'A16 / Fx9', layout: 'stereo', env: 'line', clips: [
      '179P:GEM_R1+2_1 287P:GEM_R1+ 364. 396P:GEM 441P 445. 451P:( 468P:( 482. 541z 542. 568P:GE 600. 684P:GEM ' + RUN + ' 1133P:GEM_R 1204P 1217. 1255P:G 1273. 1339c:A 1359. 1395c 1401. 1457c 1466. 1532P 1540. 1548c:AT~Int',
      '45P 50P 60P 76. 105P 118P:GE 144. 237P:GE 268. 320P 336. 389P 404P:G 426P 438. 484P:G 503. 517P 528P 538. 569P 578P 590P 600P:G 619P 630. 659P 663. 679P 692. 703P 707. 729P 741P 755. 764P 768. 778P 782. 812P 822. 834P 836. 917P 927P 937P 948P 960P:G 972. 987P 1008. 1016P 1024. 1064P:GEM_R1 1131. 1301P:GEM 1338P:GEM_R1+2_171003_0060_Hospital_SFX_Heart~Monitor_171011_TC_01015908.wav',
      '440P:GEM_R1+2_171003_0060_Hospital_SFX_Heart~Monitor 857. 871P:GEM_R1 940. 1149V:GEM_R1+2_171003_0060_Airbase_BG_Plane 1482V:GEM_R1+ 1557.'],
    marks: ['x287,725,821,960,1133,1204', '', 'x440,1482'],
  },
  {
    name: 'A17 / Fx10', layout: 'stereo', env: 'line', clips: [
      '179P:GEM_R1+2_1 287P:GEM_R1 363P:GE 396P 413P 430P 445P:G 468P:( 482P:GEM_R 550P:GEM_ 600P:GEM 652P 667P 684P:GEM ' + RUN + ' 1133P:GEM_R1v0.9_ 1252V:GEM_R1v0 1339c:A 1359V:GEM 1395c 1401V:GE 1429V:GE 1457c 1466V:GE 1497V 1506. 1525V 1532P 1540. 1548c:AT~Int',
      '45V 62V:GEM_ 114V:GEM_R1v 198V:GEM_R1v0. 293V 313V 336V:GEM_R1v 421V:G 449V:G 472V:GE 508V:GE 538V:GE 570K 583K:T 598V:GEM_R1v0.9_ 708V:GEM_R1v0.9_171219_Sc 896V:GEM_R1v( 984V:GEM_R1v0.9_1712 1131V:GEM_R1+2_171003_0060_ 1338V:GEM_R1+2_171003_0060_Hospital',
      '26V:GEM_R 90V:GEM_R1+2_171003_0060_Hos 324V:GE 358V:GEM_R 424V 440V:GEM_R 506V:GEM_R1+2_171003_0060_Hospital 763V:GEM_R1+2_ 857. 871V:GEM_R 935. 1149V:GEM_R1+2_171003_0060_Airbase_BG\'s_17 1482V:GEM_R1+ 1557.'],
    marks: ['x287,363,414,430,445,550,652,667,725,821,960,1133,1253,1498,1532', 'x62,114,198,293,313,336,421,449,472,508,538,573,580,601,708,896,984,1133', 'x26,90,324,358,424,440,506,763,1482'],
  },
  { name: 'A18 / 5.1 Fx', layout: 'surround', clips: ['35P:GEMINI_TH_R1_51_24FPS_STEMS_FX~FO~FD.wav', '', '1557.'] },
  { name: 'A19 / 5.1 Bg', layout: 'surround', clips: ['35V:GEMINI_TH_R1_51_24FPS_STEMS_BG~CX~FD.wav', '', '1557.'] },
  {
    name: 'A20 / Mx1', layout: 'stereo', env: 'music', clips: [
      '35M:GEMINI~1m01~Wedding~c6. 244. 373M:GEMINI~1m02~Mission~Briefing~c8.0_2907~v13.02~LB~01.01.42.06~2mx.wav 1320. 1547M:GEMINI~1m03',
      '92. 439M:GEMINI~1m03a~He 581. 612M:GEM_1m03b~Mission~Gone~Wrong_R1v8.0_v9.01~and~v9.04~INSERT_01-09-03 1208.',
      HOSP + ' 871M 881M:GEM_1m03~Title~Cards_R1v1.0_ 1124M 1138M:GEMINI~1m04~c0.6 1293.'],
    marks: ['', '', 'x880,1123'],
  },
  {
    name: 'A21 / Mx2', layout: 'stereo', env: 'music', clips: [
      '226M:GEMINI~1m01~Opening~c1003~v3. 482M:GEMI 532. 682I:Gem 725. 733I:Gem 777I 793I:Ge 822. 826I:Gemini 886I:Gemini~Eerie~Suite~1~v2. 1083I:Gem 1120I:Gemini~Eerie~S 1238. 1484M:GE 1516.',
      "45M:GEMINI~1m03a~He's~Here~c7.0_2864~v11.06~LB~01.06.10.18~2mx.wav 637M:GEMINI~1m03b~Mission~Gone~Wrong~c6.0_2371~v7.04~LB~01.08.57.23~2mx 1208.",
      '346M:GEM_1m04~Hospital~Part~1_R1 585M:GEM_1m04~Hospital 741. 774M:GEMI 829M 846. 886M 905M 912M 920M:GEMINI~1m03~Title 1077M 1087M:GEMIN 1143I:TRS_1m04add 1257.'],
    marks: ['x482,792,886,1083', '', 'x585,829,903,912,920,1077,1087'],
  },
  {
    name: 'A22 / Mx3', layout: 'stereo', env: 'music', clips: [
      '147M:MI6~Loves~Redux 287M:MI6~Loves 371. 389M:GEMINI~1m02a~Mission~c6.0_2371~v10.07~LB~0 755M:GEMINI~1m02a~Mission~c6.0_2371~v10.07~LB~0 1120M:GEMINI~1m 1211M:GEMINI~1m02 1321. 1495M:GEM_1m',
      "7. 48M:GEM_1m03a~He's~Here~Edit~for~Previe 346M:GEM_1m03a~He's~Here~Edit~for~Previe 637. 960M:GEM_1m03b~Mission 1133M:GEM_1m03b~Mission~Gone~Wrong~Part~2_ 1455.",
      HOSP + ' 843M 857. 871M 892. 1112M:GEMINI~1m06~Rammste 1298.'],
    marks: ['x287,755,1120,1211', 'x348,1133', 'x850,878'],
  },
  { name: 'A23 / 5.1 Mx', layout: 'surround', clips: ['35M:GEMINI_TH_R1_51_24FPS_STEMS_MX~FD.wav', '', '1557.'] },
];

/* ---------- effect badges and locators ---------- */

const OVAL: Record<string, string> = { o: 'bg-white', i: 'bg-[#2828b8]', '0': 'bg-[#a82c10]', '3': 'bg-[#20c030]', '4': 'bg-[#c030c0]' };

function Glyph({ kind }: { kind: string }) {
  const ink = '#341838';
  switch (kind) {
    case 'v': return <path d="M4 3h9L8.5 8.6z" fill={ink} />;
    case 'p': return <path d="M4 5.5h9M8.5 2.2v6.6" stroke={ink} strokeWidth="1.3" />;
    case 'k': return <path d="M3 4h3v3H3zM6 5.5h7M10 5.5v2M12 5.5v2" stroke={ink} fill="none" />;
    case 'f': return <><path d="M1 1h6v9H1z" fill="#e4dcec" /><path d="M13 1L8 5.5 13 10z" fill={ink} /></>;
    case 'r': return <><rect x="2" y="1" width="13" height="9" fill="#000" /><path d="M2 2l5 8H2z" fill="#0a0" /><path d="M4 1h4l6 9h-4z" fill="#e00" /><path d="M8 1h5l2 3v6z" fill="#00f" /><path d="M13 1h2v3z" fill="#fff" /></>;
    case 'x': return <><rect x="4" y="2" width="9" height="7" fill={ink} /><path d="M5 3h2v1.500H5zM9 3h2v1.500H9zM7 4.500h2V6H7zM11 4.500h1V6h-1zM5 6h2v1.500H5zM9 6h2v1.500H9z" fill="#c4b0c8" /></>;
    case 'h': return <rect x="1.500" y="1.500" width="9" height="8" fill={ink} />;
    case 'q': return <path d="M8 2h5v4H8zM8 5v3" stroke={ink} fill="none" />;
    case 'w': return <><rect width="17" height="11" fill="#c6c298" opacity=".3" /><path d="M2 9.500L6 1.500h9L11 9.500z" fill="#a890ac" stroke={ink} /><path d="M6 8l2-4M9 7l2-4" stroke={ink} /></>;
    case 'W': return <path d="M4 2h2v4H4zM8 5h2v4H8zM12 2h2v4h-2z" fill={ink} />;
    case 'e': return <><rect x="3" y="2" width="11" height="3" fill={ink} /><rect x="3" y="6.500" width="11" height="1.800" fill={ink} /></>;
    case 'n': return <path d="M8.500 2v3M4 8V5.500h9V8M3 8h3M11 8h3" stroke={ink} fill="none" />;
    default: return null;
  }
}

function Badge({ kind }: { kind: string }) {
  if (OVAL[kind]) {
    return <span className={`block h-[10.500px] w-[6px] rounded-[50%] border border-black ${OVAL[kind]}`} />;
  }
  if (kind === 'S') {
    return (
      <span className="flex h-[12px] w-[27px] items-center justify-center rounded-[2px] border border-[#333] bg-[#8e8e8e] text-[9px] leading-none text-black">
        <b className="bg-[#d0d0d0] px-px font-normal">S</b>
      </span>
    );
  }
  const text = kind === 'T' ? 'T' : kind === 'A' ? 'AP' : kind === 'E' ? 'E-' : '';
  return (
    <span className="relative block h-[12px] w-full rounded-[2px] border border-[#3c303e] bg-[#ac94b0]">
      {text ? (
        <span className={`flex h-full items-center justify-center text-[#341838] leading-none ${kind === 'T' ? 'font-[Liberation_Serif] text-[12px] font-bold' : 'text-[8px] font-bold'}`}>{text}</span>
      ) : (
        <svg viewBox="0 0 17 11" preserveAspectRatio="none" className="block h-full w-full"><Glyph kind={kind} /></svg>
      )}
      {kind !== 'r' && kind !== 'W' && kind !== 'p' ? <i className="absolute -right-[2px] bottom-0 h-[4px] w-[4px] bg-[#1ef000]" /> : null}
    </span>
  );
}

function Marks({ marks, audioRow }: { marks: Mark[]; audioRow?: boolean }) {
  return (
    <>
      {marks.map((m, i) => {
        const w = OVAL[m.kind] ? 6 : m.kind === 'S' ? 27 : m.kind === 'E' ? 16 : m.kind === 'x' ? (audioRow ? 11 : 12) : m.kind === 'f' ? 11 : 17;
        return (
          <div key={i} className="absolute inset-y-0 flex items-center" style={{ left: m.x - w / 2, width: w }}>
            <Badge kind={m.kind} />
          </div>
        );
      })}
    </>
  );
}

function ClipBlock({ clip, shift, surround }: { clip: Clip; shift: string; surround?: boolean }) {
  return (
    <div
      className={`relative flex shrink-0 items-center overflow-hidden border-t border-l border-r border-r-black ${FILL[clip.color] ?? ''}`}
      style={{ marginLeft: clip.gap, width: clip.w }}
    >
      {surround ? (
        <i className="absolute inset-0 bg-[repeating-linear-gradient(180deg,transparent_0_4.500px,rgba(255,255,255,0.16)_4.500px_6px)]" />
      ) : null}
      {clip.cap ? (
        <span className="absolute -inset-x-px -top-px flex h-[3px] flex-col">
          <i className={`h-[2px] ${CAP[clip.cap]}`} />
          <i className="h-px bg-black" />
        </span>
      ) : null}
      {clip.label ? <span className={`relative whitespace-pre pl-[5px] text-black ${shift}`}>{clip.label}</span> : null}
    </div>
  );
}

/* ---------- audio level automation ---------- */

function rand(seed: number) {
  const v = Math.sin(seed * 12.9898) * 43758.5453;
  return v - Math.floor(v);
}

function Envelope({ clips, h, env }: { clips: Clip[]; h: number; env: string }) {
  const shapes: string[] = [];
  const lines: string[] = [];
  const guides: string[] = [];
  const key = (x: number, y: number) => shapes.push(`M${x.toFixed(1)} ${(y - 3).toFixed(1)}l1 2 2 1v3h-6v-3l2-1z`);
  clips.forEach((c) => {
    if (c.color === 'z' || c.w < 3) return;
    const l = c.x, r = c.x + c.w;
    guides.push(`M${l.toFixed(1)} ${(h * 0.4).toFixed(1)}H${r.toFixed(1)}`);
    if (env === 'none') return;
    const mid = h * 0.5;
    if (env === 'music') {
      if (c.w < 12) return;
      const y0 = h * 0.46;
      const fadeIn = c.color === 'M' && c.w > 40;
      let d = fadeIn ? `M${l} ${h}L${l + 6} ${y0}` : `M${l} ${h * 0.55}L${l + 4} ${y0 + 3}`;
      let x = l + 8 + rand(l) * 30;
      if (fadeIn) { key(l + 3, h - 3); key(l + 8, y0); }
      while (x < r - 20) {
        const y = y0 + rand(x) * 5;
        d += `L${x.toFixed(1)} ${y.toFixed(1)}`;
        key(x, y);
        x += 18 + rand(x + 3) * 50;
      }
      d += fadeIn ? `L${r - 4} ${h - 3}` : `L${r} ${y0 + 3}`;
      if (fadeIn) key(r - 4, h - 3);
      lines.push(d);
      return;
    }
    if (env === 'dense') {
      if (c.w > 60) {
        lines.push(`M${l} ${mid}H${r}`);
        key(l + 4, mid);
        key(r - c.w * 0.15, mid + 1);
        return;
      }
      if (c.color === 'R') {
        lines.push(`M${l} ${mid}H${r}`);
        if (rand(l) > 0.5) shapes.push(`M${l} ${h}v-${h * 0.15}l2 ${h * 0.15}z`);
        if (rand(l) > 0.75) key(l + c.w / 2, mid);
        return;
      }
      const j = rand(l);
      lines.push(`M${l} ${mid}H${r}`);
      if (c.color === 'o') return;
      const a = Math.min(4, c.w * 0.22);
      if (j > 0.2) shapes.push(`M${l} ${h}V${h * (0.62 + j * 0.15)}l${a} ${h * 0.2}v${h * 0.2}z`);
      if (j < 0.8) shapes.push(`M${r - 1} ${h}V${h * (0.8 - j * 0.2)}l${-a} ${h * 0.2}v${h * 0.2}z`);
      if (j > 0.55) key(l + c.w * 0.5, mid);
      return;
    }
    lines.push(`M${l} ${mid}H${r}`);
    const j = rand(l);
    if (c.w > 8 && j > 0.5 && c.color !== 'o') key(l + c.w * (0.2 + j * 0.5), mid);
    if (c.color === 'L' || c.color === 'Y') key(l + 8, mid);
  });
  return (
    <svg className="absolute inset-0 h-full w-full" aria-hidden>
      <path d={guides.join('')} stroke="#686868" strokeWidth="1" fill="none" opacity=".85" />
      <path d={lines.join('')} stroke="#000" strokeWidth="1.100" fill="none" />
      <path d={shapes.join('')} fill="#000" />
    </svg>
  );
}

/* ---------- track header ---------- */

const blueCell = 'border border-[#42546a] bg-linear-to-b from-[#3b4858] to-[#323e4c]';
const darkCell = 'border border-[#2e2e2e] bg-[#232323]';

function Pencil() {
  return (
    <svg viewBox="0 0 10 14" className="h-[12px] w-[9px]"><path d="M7 2.500v5L5.300 10 3 11.500V7L5 3.800z" fill="#8e9298" stroke="#2a3440" strokeWidth=".8" /></svg>
  );
}

function Speaker({ layout }: { layout: Layout }) {
  if (layout === 'surround') {
    return <svg viewBox="0 0 14 12" className="absolute left-[3px] top-[9px] h-[11px] w-[12px]"><path d="M1 2h12v9h-2V6L8 9 6 6v5H4V9H2z" fill="#9a9a9a" /><path d="M1 4v8M3 10v2" stroke="#bbb" strokeDasharray="1 1" /></svg>;
  }
  if (layout === 'stereo') {
    return <svg viewBox="0 0 14 16" className="absolute left-[5px] top-[6px] h-[15px] w-[13px]"><path d="M1 4h3l3-3v7H5L4 7H1zM5 9h2l3-4v10L7 12H5z" fill="#9298a0" stroke="#26303c" strokeWidth=".7" /></svg>;
  }
  return <svg viewBox="0 0 12 14" className="absolute left-[7px] top-[6px] h-[13px] w-[11px]"><path d="M1 5h3l4-3v10L4 9H1z" fill="#9298a0" stroke="#26303c" strokeWidth=".7" /></svg>;
}

function Header({ name, children, lock = true, layout }: { name: string; children?: React.ReactNode; lock?: boolean; layout?: Layout }) {
  return (
    <div className="flex h-full gap-[1.200px] pb-[1.400px]">
      <div className={`relative flex w-[183px] items-center justify-center ${blueCell}`}>
        {layout ? <Speaker layout={layout} /> : null}
        <span className="whitespace-nowrap text-[12.500px] tracking-[-0.1px] text-[#b9bbbe]">{name}</span>
      </div>
      <div className={`flex w-[17px] items-center justify-center ${lock ? blueCell : darkCell}`}>{lock ? <Pencil /> : null}</div>
      {children ?? <div className={`w-[17px] ${darkCell}`} />}
    </div>
  );
}

function SoloMute({ solo }: { solo: boolean }) {
  const on = 'border-[#3c7422] bg-[#386a20]';
  const off = 'border-[#2e2e2e] bg-[#242424]';
  const mute = 'border-[#684a2c] bg-[#4a3626]';
  return (
    <div className="flex w-[17px] flex-col gap-px text-[9px] leading-none text-[#9a9a96]">
      <span className={`flex flex-1 items-center justify-center border ${solo ? on : off}`}>S</span>
      <span className={`flex flex-1 items-center justify-center border ${solo ? off : mute}`}>M</span>
    </div>
  );
}

/* ---------- rulers ---------- */

function Ruler({ kind }: { kind: 'top' | 'tc' | 'ec' }) {
  const tone = kind === 'top' ? 'from-[#8a8a8a] to-[#6a6a6a]' : kind === 'tc' ? 'from-[#a6a6a6] to-[#848484]' : 'from-[#bcbcbc] to-[#686868]';
  return (
    <div className={`flex h-full overflow-hidden border-b border-black bg-linear-to-b ${tone}`}>
      <div className="-ml-[108.500px] flex">
        {Array.from({ length: 20 }, (_, n) => (
          <div key={n} className={`relative flex w-[199.720px] shrink-0 items-end ${kind === 'ec' ? 'justify-end pr-[78.500px]' : 'justify-center'}`}>
            <span className={`whitespace-nowrap leading-none text-[13px] text-black ${kind === 'top' ? '' : 'pb-px'} ${kind === 'ec' ? 'tracking-normal' : 'tracking-[0.2px]'}`}>
              {kind === 'ec' ? `${n * 90}+00` : `01:${String(n).padStart(2, '0')}:00:00`}
            </span>
            {kind !== 'top' ? <i className="absolute left-[106px] top-0 h-[9px] w-px bg-black/80" /> : null}
          </div>
        ))}
      </div>
    </div>
  );
}

/* ---------- tool palette ---------- */

const toolBase = 'flex items-center justify-center rounded-[2px] border';
const toolDark = 'border-[#303030] bg-[#242424]';
const toolBlue = 'border-[#42546a] bg-linear-to-b from-[#2e3c4c] to-[#3b4858]';

function Ico({ children }: { children: React.ReactNode }) {
  return <svg viewBox="0 0 18 14" className="h-[14px] w-[18px]" fill="none">{children}</svg>;
}

function Palette() {
  return (
    <div className="flex w-[61.500px] shrink-0 flex-col border-l-2 border-[#2c2c2c] bg-[#1f1f1f] pl-[4.500px] pt-[514px]">
      <div className={`h-[21px] w-[50px] ${toolBase} ${toolDark}`}>
        <Ico><path d="M2 1h10v3H2zM2 5.500h10v3H2zM2 10h10v3H2z" fill="#9a9a9a" /><path d="M13 2h3v10h-3M14 7h2" stroke="#9a9a9a" /></Ico>
      </div>
      <div className="mt-[4px] flex h-[130px] w-[50px] flex-col items-end rounded-[2px] border border-[#303030] bg-[#222] pt-[8px]">
        {[
          <Ico key="a"><path d="M2 5h8V1.500L16 7l-6 5.500V9H2z" fill="#e02420" stroke="#000" /></Ico>,
          <Ico key="b"><path d="M1.500 4.500h3v5h-3zM6 4.500h5V1.500L16 7l-5 5.500V9.500H6z" fill="#ffffa0" stroke="#000" /></Ico>,
          <Ico key="c"><path d="M3 2.500h5v9H4zM9 4h3v7H9zM13 4h3v6h-3z" fill="#ff0000" stroke="#000" /></Ico>,
          <Ico key="d"><path d="M5 2h3v10H5zM8 4h6v7H8z" fill="#ffff20" stroke="#000" /></Ico>,
          <Ico key="e"><path d="M4 1h9M1.500 1v9M5 13h12V4" stroke="#9a9a9a" strokeWidth="1.300" /><path d="M3 12l4-4h1V5h3v3H8M11 5l4-4" stroke="#9a9a9a" strokeWidth="1.300" /></Ico>,
        ].map((icon, i) => (
          <div key={i} className="flex h-[22.450px] w-[36px] items-center justify-center border border-r-0 border-[#333] bg-[#1f1f1f]">{icon}</div>
        ))}
      </div>
      <div className="mt-[3.500px] flex w-[50px] flex-col gap-[1.450px]">
        <div className={`h-[21px] ${toolBase} ${toolBlue}`}><Ico><path d="M1 2h16v10H1zM3.500 5v4h4V5zM10.500 5v4h4V5z" fill="#dadada" fillRule="evenodd" /><path d="M9 0v14" stroke="#dadada" strokeWidth="1.500" /></Ico></div>
        <div className={`h-[21px] ${toolBase} ${toolDark}`}><Ico><path d="M3 1h4v12H3zM7 2.500h9v9H7M9.500 5.500h4v3h-4z" stroke="#9a9a9a" strokeWidth="1.500" /></Ico></div>
        <div className={`h-[21px] ${toolBase} ${toolDark}`}><Ico><path d="M1 4h16M1 10h16" stroke="#9a9a9a" strokeWidth="2.600" /><path d="M7 1v6M11.500 7v6" stroke="#9a9a9a" strokeWidth="3" /></Ico></div>
        <div className={`h-[21px] ${toolBase} ${toolDark}`}><Ico><path d="M1 1.500h16v11H1zM3 4v6h3V4zM7.500 4v6h3V4zM12 4v6h3V4z" fill="#9a9a9a" fillRule="evenodd" /></Ico></div>
        <div className={`h-[21px] ${toolBase} ${toolDark}`}><Ico><path d="M8 1h9l-5 12H5l2-4 2-5M1 9h4M3 6h4M8 3h8M6 11h7" stroke="#9a9a9a" strokeWidth="1.300" strokeDasharray="2 1" /><path d="M14.500 3L11 11M9 3L6 11" stroke="#9a9a9a" /></Ico></div>
      </div>
      <div className={`mt-[2.800px] h-[21px] w-[50px] ${toolBase} ${toolBlue}`}><Ico><path d="M1 7l3.500-6L8 7zM10 13l3.500-6 3.500 6zM6 5l6 5" fill="#dadada" stroke="#dadada" strokeWidth=".8" /></Ico></div>
    </div>
  );
}

const ROW: Record<Layout, string> = { mono: 'h-[24.820px]', stereo: 'h-[27.180px]', surround: 'h-[27.180px]' };

function VideoLane({ t }: { t: VTrack }) {
  const clips = t.clips
    ? parseClips(t.clips, VB).map((c) => ({
        ...c,
        color: t.map?.[c.color] ?? c.color,
        cap: t.noCap ? undefined : c.cap,
        label: t.upper ? c.label?.toUpperCase() : c.label,
      }))
    : [];
  return (
    <div className="relative flex h-full overflow-hidden border-b border-black bg-[#2c2c2c] shadow-[inset_0_1px_0_#393939]">
      {clips.map((c, i) => <ClipBlock key={i} clip={c} shift="top-px" />)}
      {t.marks ? <Marks marks={parseMarks(t.marks, VB)} /> : null}
    </div>
  );
}

function AudioLane({ t }: { t: ATrack }) {
  const clips = parseClips(t.clips ?? ['', '', ''], AB, '24z 27. ');
  const tall = t.layout !== 'mono';
  return (
    <div className="relative flex h-full overflow-hidden border-b border-black bg-[#2c2c2c] shadow-[inset_0_1px_0_#393939]">
      {tall ? <i className="absolute inset-x-0 top-1/2 h-px bg-[#343434]" /> : null}
      {clips.map((c, i) => <ClipBlock key={i} clip={c} shift={tall ? 'top-[3px]' : 'top-[2px]'} surround={t.layout === 'surround'} />)}
      <Envelope clips={clips} h={tall ? 26 : 24} env={t.env ?? 'none'} />
      {t.marks ? <Marks marks={parseMarks(t.marks, AB)} audioRow /> : null}
    </div>
  );
}

export default function App() {
  return (
    <div className="flex h-[1264px] w-[4096px] overflow-hidden bg-[#181818] font-[Inter,'Liberation_Sans',sans-serif] text-[13px] tracking-[0.1px]">
      <Palette />
      <div className="-ml-[56px] flex w-[285px] shrink-0 flex-col">
        <div className="flex h-[20.500px] items-center border-x border-b border-black bg-linear-to-b from-[#a0a0a0] to-[#848484] pl-[2px]">
          <div className="flex h-[17.500px] w-[256px] items-center justify-center border border-black bg-linear-to-b from-[#1c1c1c] to-[#0c0c0c]">
            <span className="inline-block scale-y-115 font-['DejaVu_Sans_Mono',monospace] text-[14px] leading-none tracking-[0.150px] text-[#9ddc2c]">01:00:00:00</span>
          </div>
          <svg viewBox="0 0 8 12" className="ml-[5px] h-[12px] w-[9px]"><path d="M1 0l6 6-6 6z" fill="#222" /></svg>
        </div>
        <div className="flex flex-1 flex-col pl-[59.500px] pt-[61px]">
          {video.map((t) => (
            <div key={t.name} className="h-[22.455px]">
              <Header name={t.name}>
                {t.name.startsWith('V10') ? (
                  <div className={`flex w-[17px] items-center justify-center ${blueCell}`}>
                    <i className="flex h-[8px] w-[7px] items-center justify-center border-2 border-[#9aa0a8]" />
                  </div>
                ) : undefined}
              </Header>
            </div>
          ))}
          <div className="h-[22.455px]"><Header name="TC1" lock={false} /></div>
          {audio.map((t) => (
            <div key={t.name} className={ROW[t.layout]}>
              <Header name={t.name} layout={t.layout}><SoloMute solo={t.layout === 'surround'} /></Header>
            </div>
          ))}
          <div className="h-[22.455px]"><Header name="EC1" lock={false} /></div>
        </div>
      </div>
      <div className="flex h-[1244px] flex-1 pr-[3.500px]">
        <div className="w-[0.500px]" />
        <div className="flex w-[3802px] flex-col border-l border-r border-l-[#0000ff] border-r-black">
          <div className="h-[20.500px]"><Ruler kind="top" /></div>
          <div className="h-[61px] border-b border-black" />
          {video.map((t) => <div key={t.name} className="h-[22.455px]"><VideoLane t={t} /></div>)}
          <div className="h-[22.455px]"><Ruler kind="tc" /></div>
          {audio.map((t) => <div key={t.name} className={ROW[t.layout]}><AudioLane t={t} /></div>)}
          <div className="h-[22.455px]"><Ruler kind="ec" /></div>
        </div>
      </div>
    </div>
  );
}
